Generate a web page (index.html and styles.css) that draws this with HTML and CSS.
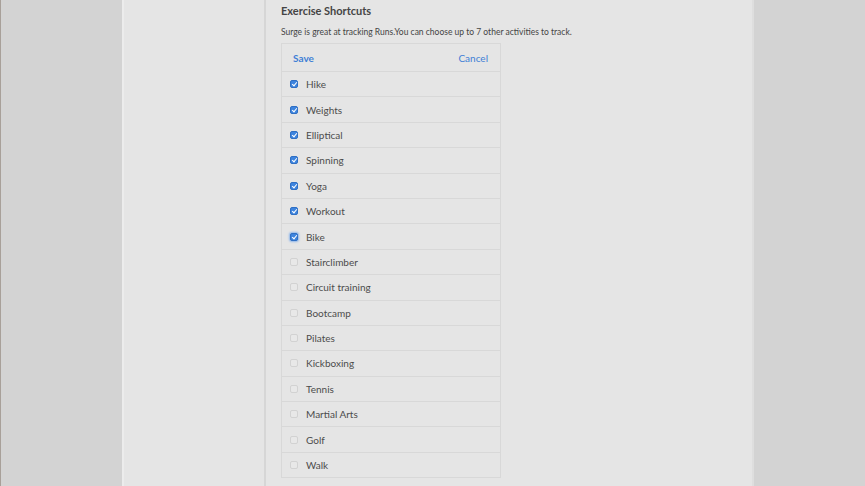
FILE: index.html
```html
<!DOCTYPE html>
<html lang="en">
<head>
  <meta charset="UTF-8">
  <title>Exercise Shortcuts</title>
  <link rel="stylesheet" href="styles.css">
</head>
<body>

  <div class="page">
    <div class="sidebar"></div>

    <div class="content">
      <h2>Exercise Shortcuts</h2>
      <p class="intro">Surge is great at tracking Runs.You can choose up to 7 other activities to track.</p>

      <div class="shortcuts">
        <div class="shortcuts-head">
          <a class="save">Save</a>
          <a class="cancel">Cancel</a>
        </div>
        <label class="row"><span class="box checked"></span>Hike</label>
        <label class="row"><span class="box checked"></span>Weights</label>
        <label class="row"><span class="box checked"></span>Elliptical</label>
        <label class="row"><span class="box checked"></span>Spinning</label>
        <label class="row"><span class="box checked"></span>Yoga</label>
        <label class="row"><span class="box checked"></span>Workout</label>
        <label class="row"><span class="box checked focus"></span>Bike</label>
        <label class="row"><span class="box"></span>Stairclimber</label>
        <label class="row"><span class="box"></span>Circuit training</label>
        <label class="row"><span class="box"></span>Bootcamp</label>
        <label class="row"><span class="box"></span>Pilates</label>
        <label class="row"><span class="box"></span>Kickboxing</label>
        <label class="row"><span class="box"></span>Tennis</label>
        <label class="row"><span class="box"></span>Martial Arts</label>
        <label class="row"><span class="box"></span>Golf</label>
        <label class="row"><span class="box"></span>Walk</label>
      </div>
    </div>
  </div>

</body>
</html>
```

FILE: styles.css
```css
body {
  margin: 0;
  height: 486px;
  overflow: hidden;
  font-family: 'Lato', 'Open Sans', sans-serif;
  background: #d3d3d3;
  border-left: 1px solid #a8a099;
  color: #555;
}

.page {
  margin-left: 121px;
  width: 628px;
  height: 486px;
  background: #e5e5e5;
  border-left: 2px solid #ececec;
  border-right: 2px solid #dedede;
  display: flex;
}

.sidebar {
  width: 140px;
  border-right: 2px solid #d6d6d6;
}

.content {
  padding-left: 15px;
}

.content h2 {
  margin: 4px 0 0;
  font-size: 11px;
  font-weight: bold;
  color: #444;
  line-height: 14px;
}

.intro {
  margin: 8px 0 0;
  font-size: 8.5px;
  line-height: 12px;
  color: #444;
}

.shortcuts {
  margin-top: 5px;
  width: 218px;
  border: 1px solid #d8d8d8;
}

.shortcuts-head {
  height: 27px;
  padding: 0 12px 0 11px;
  display: flex;
  align-items: center;
  justify-content: space-between;
  font-size: 10px;
  color: #3f7fd6;
  border-bottom: 1px solid #d8d8d8;
}

.save {
  font-weight: bold;
}

.row {
  height: 24.4px;
  padding-left: 8px;
  display: flex;
  align-items: center;
  font-size: 10px;
  color: #4c4c4c;
  border-top: 1px solid #d8d8d8;
}

.shortcuts-head + .row {
  border-top: none;
}

.box {
  width: 8px;
  height: 8px;
  margin-right: 8px;
  border: 1px solid #d2d2d2;
  border-radius: 2px;
  background: #e8e8e8;
  box-sizing: border-box;
  position: relative;
}

.box.checked {
  background: #3d84de;
  border-color: #2f6fc4;
}

.box.checked::after {
  content: "";
  position: absolute;
  left: 2px;
  top: 0px;
  width: 2px;
  height: 4px;
  border: solid #fff;
  border-width: 0 1px 1px 0;
  transform: rotate(40deg);
}

.box.focus {
  box-shadow: 0 0 2px 1px #8fb6ea;
}
```
